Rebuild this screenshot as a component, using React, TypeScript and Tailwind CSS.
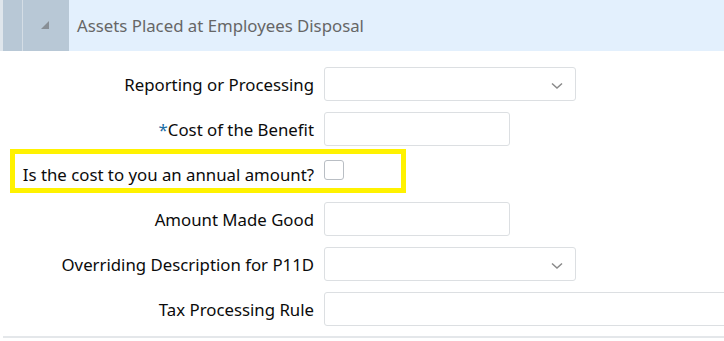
import React from "react";

const font = { fontFamily: '"Noto Sans", "Open Sans", sans-serif' };

function Chevron() {
  return (
    <svg width="12" height="8" viewBox="0 0 12 8" className="absolute right-[12px] top-[14px]">
      <path d="M1 1.5 L6 6 L11 1.5" fill="none" stroke="#8a8a8a" strokeWidth="1.5" />
    </svg>
  );
}

function Row({ label, children, required }: { label: string; children: React.ReactNode; required?: boolean }) {
  return (
    <div className="flex h-[34px] items-center">
      <div className="w-[314px] shrink-0 text-right text-[16.8px] leading-[20px] pt-[2px] text-[#0b0b0b] whitespace-nowrap">
        {required && <span className="text-[#1c6ea4]">*</span>}
        {label}
      </div>
      <div className="ml-[10px] flex-1 h-full">{children}</div>
    </div>
  );
}

export default function App() {
  return (
    <div className="relative w-[724px] h-[341px] bg-white overflow-hidden" style={font}>
      <div className="flex h-[51px]">
        <div className="w-[3px] bg-[#dfe6ec]" />
        <div className="w-[19px] bg-[#b8c8d6]" />
        <div className="w-[1px] bg-[#d4dde5]" />
        <div className="w-[46px] bg-[#b8c8d6] flex items-center justify-center">
          <svg width="10" height="10" viewBox="0 0 10 10" className="ml-[-2px] mt-[-2px]">
            <path d="M9 1 L9 9 L1 9 Z" fill="#888f96" />
          </svg>
        </div>
        <div className="flex-1 bg-[#e3f0fd] flex items-center pl-[8px] pt-[1px] text-[16.8px] text-[#666666]">
          Assets Placed at Employees Disposal
        </div>
      </div>
      <div className="flex flex-col gap-[11px] pt-[16px]">
        <Row label="Reporting or Processing">
          <div className="relative w-[252px] h-full border border-[#dcdfe2] rounded-[3px] bg-white">
            <Chevron />
          </div>
        </Row>
        <Row label="Cost of the Benefit" required>
          <div className="w-[186px] h-full border border-[#dcdfe2] rounded-[3px] bg-white" />
        </Row>
        <Row label="Is the cost to you an annual amount?">
          <div className="mt-[3px] w-[20px] h-[20px] border border-[#b9bec4] rounded-[3px] bg-white" />
        </Row>
        <Row label="Amount Made Good">
          <div className="w-[186px] h-full border border-[#dcdfe2] rounded-[3px] bg-white" />
        </Row>
        <Row label="Overriding Description for P11D">
          <div className="relative w-[252px] h-full border border-[#dcdfe2] rounded-[3px] bg-white">
            <Chevron />
          </div>
        </Row>
        <Row label="Tax Processing Rule">
          <div className="w-[420px] h-full border border-[#dcdfe2] rounded-l-[3px] bg-white" />
        </Row>
      </div>
      <div className="absolute left-[3px] right-0 top-[336px] h-[2px] bg-[#e4e7ea]" />
      <div className="absolute left-[10px] top-[149px] w-[396px] h-[44px] border-[5px] border-[#fff200]" />
    </div>
  );
}
